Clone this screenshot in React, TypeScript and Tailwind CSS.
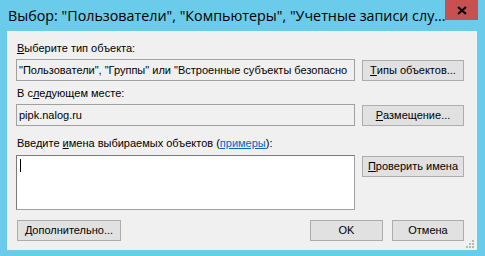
import React from "react";

const ui = { fontFamily: '"Liberation Sans", Arial, sans-serif' };

function Key({ children }: { children: React.ReactNode }) {
  return <span className="underline underline-offset-[1px]">{children}</span>;
}

function Btn({ w, children }: { w: string; children: React.ReactNode }) {
  return (
    <div
      className={`${w} h-[21px] flex items-center justify-center border border-[#adadad] bg-[#e1e1e1] text-[11px] text-black`}
    >
      {children}
    </div>
  );
}

function Grip() {
  const dots = [
    [6, 0],
    [3, 3],
    [6, 3],
    [0, 6],
    [3, 6],
    [6, 6],
  ];
  return (
    <svg width="8" height="8" className="absolute right-[2px] bottom-[2px]">
      {dots.map(([x, y], i) => (
        <rect key={i} x={x} y={y} width="2" height="2" fill="#b8b8b8" />
      ))}
    </svg>
  );
}

export default function App() {
  return (
    <div className="w-[485px] h-[256px] bg-[#6bcbea] flex flex-col" style={ui}>
      {/* заголовок */}
      <div className="h-[31px] flex items-start shrink-0">
        <div
          className="flex-1 pl-[8px] pt-[6px] text-[14.3px] leading-[20px] text-black whitespace-nowrap overflow-hidden"
          style={{ fontFamily: '"Open Sans", "Noto Sans", sans-serif' }}
        >
          Выбор: "Пользователи", "Компьютеры", "Учетные записи слу...
        </div>
        <div className="w-[33px] h-[20px] mr-[7px] bg-[#c75050] flex items-center justify-center">
          <svg width="10" height="9" viewBox="0 0 10 9">
            <path d="M1 1 L9 8 M9 1 L1 8" stroke="#000" strokeWidth="2.2" />
          </svg>
        </div>
      </div>

      {/* клиентская область */}
      <div className="relative ml-[7px] mr-[8px] h-[219px] bg-[#f0f0f0] border-r border-[#e8f4fa] pl-[9px] pt-[11px] text-[11px] leading-[13px] text-black">
        <div className="pl-[1px]">
          <Key>В</Key>ыберите тип объекта:
        </div>
        <div className="mt-[4px] flex items-start gap-[7px]">
          <div className="w-[339px] h-[22px] border border-[#a0a0a0] bg-[#f0f0f0] pl-[2px] flex items-center whitespace-nowrap overflow-hidden">
            "Пользователи", "Группы" или "Встроенные субъекты безопасно
          </div>
          <div className="mt-[1px]">
            <Btn w="w-[102px]">
              <Key>Т</Key>ипы объектов...
            </Btn>
          </div>
        </div>

        <div className="mt-[6px] pl-[1px]">
          В с<Key>л</Key>едующем месте:
        </div>
        <div className="mt-[4px] flex items-start gap-[7px]">
          <div className="w-[339px] h-[22px] border border-[#a0a0a0] bg-[#f0f0f0] pl-[2px] flex items-center">
            pipk.nalog.ru
          </div>
          <div className="mt-[1px]">
            <Btn w="w-[102px]">
              <Key>Р</Key>азмещение...
            </Btn>
          </div>
        </div>

        <div className="mt-[11px] pl-[1px]">
          Введите <Key>и</Key>мена выбираемых объектов (
          <span className="text-[#0066cc] underline underline-offset-[1px]">примеры</span>):
        </div>
        <div className="mt-[5px] flex items-start gap-[7px]">
          <div className="w-[339px] h-[55px] border border-[#a0a0a0] border-t-[#7a7a7a] border-l-[#7a7a7a] bg-white pl-[3px] pt-[3px]">
            <div className="w-[1px] h-[13px] bg-black" />
          </div>
          <div className="mt-[1px]">
            <Btn w="w-[102px]">
              <Key>П</Key>роверить имена
            </Btn>
          </div>
        </div>

        <div className="mt-[10px] flex items-start">
          <div className="ml-[1px]">
            <Btn w="w-[104px]">
              <Key>Д</Key>ополнительно...
            </Btn>
          </div>
          <div className="ml-[189px] flex gap-[9px]">
            <Btn w="w-[73px]">OK</Btn>
            <Btn w="w-[72px]">Отмена</Btn>
          </div>
        </div>
        <Grip />
      </div>
    </div>
  );
}
